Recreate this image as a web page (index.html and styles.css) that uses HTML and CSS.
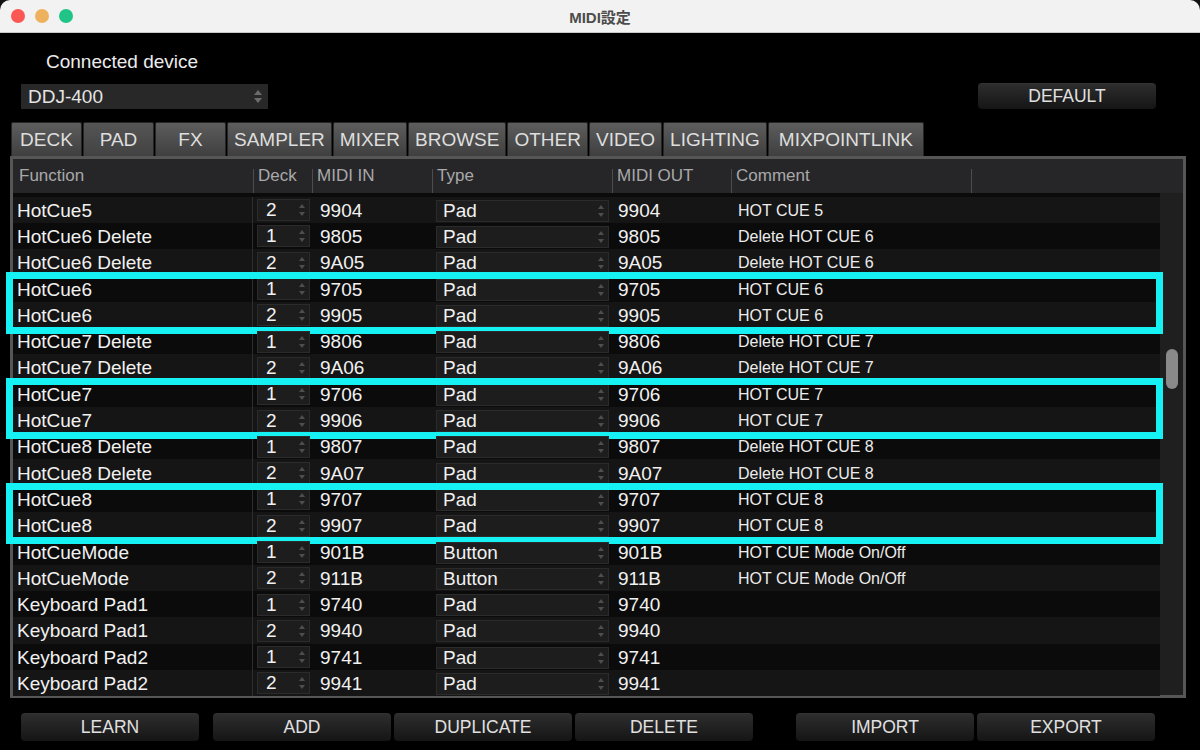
FILE: index.html
```html
<!DOCTYPE html>
<html lang="ja">
<head>
  <meta charset="UTF-8">
  <meta name="viewport" content="width=device-width, initial-scale=1.0">
  <title>MIDI設定</title>
  <link rel="stylesheet" href="styles.css">
</head>
<body>
  <div class="window">
    <div class="titlebar">
      <div class="lights">
        <span class="light red"></span>
        <span class="light yellow"></span>
        <span class="light green"></span>
      </div>
      <div class="title">MIDI設定</div>
      <div></div>
    </div>

    <div class="device-label">Connected device</div>
    <div class="top-row">
      <div class="device-select">DDJ-400</div>
      <button class="btn">DEFAULT</button>
    </div>

    <div class="tabs">
      <div class="tab">DECK</div>
      <div class="tab active">PAD</div>
      <div class="tab">FX</div>
      <div class="tab">SAMPLER</div>
      <div class="tab">MIXER</div>
      <div class="tab">BROWSE</div>
      <div class="tab">OTHER</div>
      <div class="tab">VIDEO</div>
      <div class="tab">LIGHTING</div>
      <div class="tab wide">MIXPOINTLINK</div>
    </div>

    <div class="panel">
      <div class="header">
        <div class="hcell first">Function</div>
        <div class="hcell">Deck</div>
        <div class="hcell">MIDI IN</div>
        <div class="hcell">Type</div>
        <div class="hcell">MIDI OUT</div>
        <div class="hcell">Comment</div>
        <div class="hcell"></div>
      </div>
      <div class="list">
        <div class="rows">
          <div class="row lt"><span class="fn">HotCue5</span><span class="deck"><span class="sel">2</span></span><span class="in">9904</span><span class="type"><span class="sel">Pad</span></span><span class="out">9904</span><span class="cmt">HOT CUE 5</span></div>
          <div class="row"><span class="fn">HotCue6 Delete</span><span class="deck"><span class="sel">1</span></span><span class="in">9805</span><span class="type"><span class="sel">Pad</span></span><span class="out">9805</span><span class="cmt">Delete HOT CUE 6</span></div>
          <div class="row lt"><span class="fn">HotCue6 Delete</span><span class="deck"><span class="sel">2</span></span><span class="in">9A05</span><span class="type"><span class="sel">Pad</span></span><span class="out">9A05</span><span class="cmt">Delete HOT CUE 6</span></div>
          <div class="mark">
            <div class="row"><span class="fn">HotCue6</span><span class="deck"><span class="sel">1</span></span><span class="in">9705</span><span class="type"><span class="sel">Pad</span></span><span class="out">9705</span><span class="cmt">HOT CUE 6</span></div>
            <div class="row lt"><span class="fn">HotCue6</span><span class="deck"><span class="sel">2</span></span><span class="in">9905</span><span class="type"><span class="sel">Pad</span></span><span class="out">9905</span><span class="cmt">HOT CUE 6</span></div>
          </div>
          <div class="row"><span class="fn">HotCue7 Delete</span><span class="deck"><span class="sel">1</span></span><span class="in">9806</span><span class="type"><span class="sel">Pad</span></span><span class="out">9806</span><span class="cmt">Delete HOT CUE 7</span></div>
          <div class="row lt"><span class="fn">HotCue7 Delete</span><span class="deck"><span class="sel">2</span></span><span class="in">9A06</span><span class="type"><span class="sel">Pad</span></span><span class="out">9A06</span><span class="cmt">Delete HOT CUE 7</span></div>
          <div class="mark">
            <div class="row"><span class="fn">HotCue7</span><span class="deck"><span class="sel">1</span></span><span class="in">9706</span><span class="type"><span class="sel">Pad</span></span><span class="out">9706</span><span class="cmt">HOT CUE 7</span></div>
            <div class="row lt"><span class="fn">HotCue7</span><span class="deck"><span class="sel">2</span></span><span class="in">9906</span><span class="type"><span class="sel">Pad</span></span><span class="out">9906</span><span class="cmt">HOT CUE 7</span></div>
          </div>
          <div class="row"><span class="fn">HotCue8 Delete</span><span class="deck"><span class="sel">1</span></span><span class="in">9807</span><span class="type"><span class="sel">Pad</span></span><span class="out">9807</span><span class="cmt">Delete HOT CUE 8</span></div>
          <div class="row lt"><span class="fn">HotCue8 Delete</span><span class="deck"><span class="sel">2</span></span><span class="in">9A07</span><span class="type"><span class="sel">Pad</span></span><span class="out">9A07</span><span class="cmt">Delete HOT CUE 8</span></div>
          <div class="mark">
            <div class="row"><span class="fn">HotCue8</span><span class="deck"><span class="sel">1</span></span><span class="in">9707</span><span class="type"><span class="sel">Pad</span></span><span class="out">9707</span><span class="cmt">HOT CUE 8</span></div>
            <div class="row lt"><span class="fn">HotCue8</span><span class="deck"><span class="sel">2</span></span><span class="in">9907</span><span class="type"><span class="sel">Pad</span></span><span class="out">9907</span><span class="cmt">HOT CUE 8</span></div>
          </div>
          <div class="row"><span class="fn">HotCueMode</span><span class="deck"><span class="sel">1</span></span><span class="in">901B</span><span class="type"><span class="sel">Button</span></span><span class="out">901B</span><span class="cmt">HOT CUE Mode On/Off</span></div>
          <div class="row lt"><span class="fn">HotCueMode</span><span class="deck"><span class="sel">2</span></span><span class="in">911B</span><span class="type"><span class="sel">Button</span></span><span class="out">911B</span><span class="cmt">HOT CUE Mode On/Off</span></div>
          <div class="row"><span class="fn">Keyboard Pad1</span><span class="deck"><span class="sel">1</span></span><span class="in">9740</span><span class="type"><span class="sel">Pad</span></span><span class="out">9740</span><span class="cmt"></span></div>
          <div class="row lt"><span class="fn">Keyboard Pad1</span><span class="deck"><span class="sel">2</span></span><span class="in">9940</span><span class="type"><span class="sel">Pad</span></span><span class="out">9940</span><span class="cmt"></span></div>
          <div class="row"><span class="fn">Keyboard Pad2</span><span class="deck"><span class="sel">1</span></span><span class="in">9741</span><span class="type"><span class="sel">Pad</span></span><span class="out">9741</span><span class="cmt"></span></div>
          <div class="row lt"><span class="fn">Keyboard Pad2</span><span class="deck"><span class="sel">2</span></span><span class="in">9941</span><span class="type"><span class="sel">Pad</span></span><span class="out">9941</span><span class="cmt"></span></div>
        </div>
        <div class="scroll"><div class="thumb"></div></div>
      </div>
    </div>

    <div class="bottom-row">
      <button class="btn learn">LEARN</button>
      <button class="btn">ADD</button>
      <button class="btn">DUPLICATE</button>
      <button class="btn delete">DELETE</button>
      <button class="btn">IMPORT</button>
      <button class="btn">EXPORT</button>
    </div>
  </div>
</body>
</html>
```

FILE: styles.css
```css
body {
  margin: 0;
  background: #111;
  font-family: "Liberation Sans", Arial, "Noto Sans CJK JP", sans-serif;
}
.window {
  width: 1200px;
  height: 750px;
  background: #000;
  border-radius: 10px 10px 0 0;
  overflow: hidden;
  display: flex;
  flex-direction: column;
}
.titlebar {
  height: 32px;
  background: #f3f2f2;
  border-bottom: 1px solid #c9c9c9;
  display: grid;
  grid-template-columns: 1fr auto 1fr;
  align-items: center;
}
.lights {
  display: flex;
  gap: 10px;
  padding-left: 11px;
}
.light {
  width: 14px;
  height: 14px;
  border-radius: 50%;
}
.red { background: #fc5853; }
.yellow { background: #eeb25f; }
.green { background: #1fc486; }
.title {
  font-size: 15px;
  font-weight: bold;
  color: #4c4c4c;
}

.device-label {
  margin: 18px 0 0 46px;
  font-size: 19px;
  line-height: 22px;
  color: #ececec;
}
.top-row {
  margin-top: 10px;
  display: flex;
  justify-content: space-between;
  align-items: center;
  padding: 0 44px 0 21px;
}
.device-select {
  width: 247px;
  height: 25px;
  box-sizing: border-box;
  background: #282828;
  color: #e4e4e4;
  font-size: 19px;
  line-height: 25px;
  padding-left: 7px;
  position: relative;
}
.device-select::before,
.device-select::after {
  content: "";
  position: absolute;
  right: 6px;
  border-left: 4px solid transparent;
  border-right: 4px solid transparent;
}
.device-select::before {
  top: 6px;
  border-bottom: 5px solid #6c6c6c;
}
.device-select::after {
  bottom: 6px;
  border-top: 5px solid #6c6c6c;
}

.btn {
  width: 178px;
  height: 26px;
  border: none;
  border-top: 1px solid #333;
  border-radius: 4px;
  background: linear-gradient(#2d2d2d, #151515);
  color: #e0e0e0;
  font-family: inherit;
  font-size: 17.5px;
  padding: 0;
}

.tabs {
  margin-top: 13px;
  padding-left: 11px;
  display: flex;
  gap: 1px;
  height: 34px;
}
.tab {
  min-width: 71px;
  box-sizing: border-box;
  padding: 0 6px;
  text-align: center;
  line-height: 34px;
  font-size: 19px;
  color: #dedede;
  background: linear-gradient(#5d5d5d, #3f3f3f);
  border: 1px solid #262626;
  border-bottom: none;
  border-radius: 2px 2px 0 0;
}
.tab.active {
  background: linear-gradient(#555, #424242);
}
.tab.wide {
  padding: 0 10px;
}

.panel {
  margin-left: 10px;
  width: 1176px;
  height: 542px;
  box-sizing: border-box;
  border: 3px solid #565656;
  display: flex;
  flex-direction: column;
}
.header {
  height: 34px;
  flex-shrink: 0;
  background: #262629;
  display: grid;
  grid-template-columns: 240px 59px 120px 180px 119px 240px 1fr;
  align-items: center;
  font-size: 17px;
  color: #a9a9a9;
}
.hcell {
  position: relative;
  padding-left: 5px;
  height: 100%;
  line-height: 34px;
}
.hcell::before {
  content: "";
  position: absolute;
  left: 0;
  top: 10px;
  bottom: 0;
  width: 1px;
  background: #4c4c4c;
}
.hcell.first {
  padding-left: 6px;
}
.hcell.first::before {
  display: none;
}

.list {
  display: flex;
  height: 502px;
}
.rows {
  width: 1147px;
  box-sizing: border-box;
  padding-top: 3.5px;
  background: #0b0b0b;
}
.row {
  display: grid;
  grid-template-columns: 240px 59px 120px 180px 119px 1fr;
  height: 26.3px;
  box-sizing: border-box;
  padding-top: 2px;
  align-items: center;
  font-size: 19px;
  color: #f1f1f1;
}
.row.lt {
  background: #151515;
}
.fn {
  padding-left: 4px;
}
.deck {
  align-self: stretch;
  margin-top: -2px;
  border-left: 1px solid #2e2e2e;
  margin-left: -1px;
  display: flex;
  align-items: center;
  padding-top: 1px;
}
.sel {
  display: block;
  margin-left: 4px;
  height: 22px;
  box-sizing: border-box;
  background: #1d1d1d;
  border: 1px solid #2b2b2b;
  line-height: 20px;
  padding-left: 8px;
  position: relative;
}
.deck .sel { width: 53px; }
.type .sel { width: 173px; padding-left: 6px; }
.sel::before,
.sel::after {
  content: "";
  position: absolute;
  right: 4px;
  border-left: 3px solid transparent;
  border-right: 3px solid transparent;
}
.sel::before {
  top: 4px;
  border-bottom: 4px solid #4e4e4e;
}
.sel::after {
  bottom: 4px;
  border-top: 4px solid #4e4e4e;
}
.in { padding-left: 8px; }
.out { padding-left: 6px; }
.cmt {
  padding-left: 7px;
  font-size: 16px;
  color: #ececec;
}

.mark {
  position: relative;
}
.mark::after {
  content: "";
  position: absolute;
  left: -7px;
  right: -3px;
  top: -3px;
  bottom: -6px;
  border: 7px solid #16f1f3;
  pointer-events: none;
}

.scroll {
  flex: 1;
  background: #1f1f1f;
  display: flex;
  justify-content: center;
}
.thumb {
  width: 12px;
  height: 40px;
  margin-top: 156px;
  border-radius: 6px;
  background: #8a8a8a;
}

.bottom-row {
  margin-top: 15px;
  padding-left: 21px;
  display: flex;
  gap: 3px;
}
.bottom-row .btn {
  height: 28px;
}
.btn.learn { margin-right: 11px; }
.btn.delete { margin-right: 40px; }
```
